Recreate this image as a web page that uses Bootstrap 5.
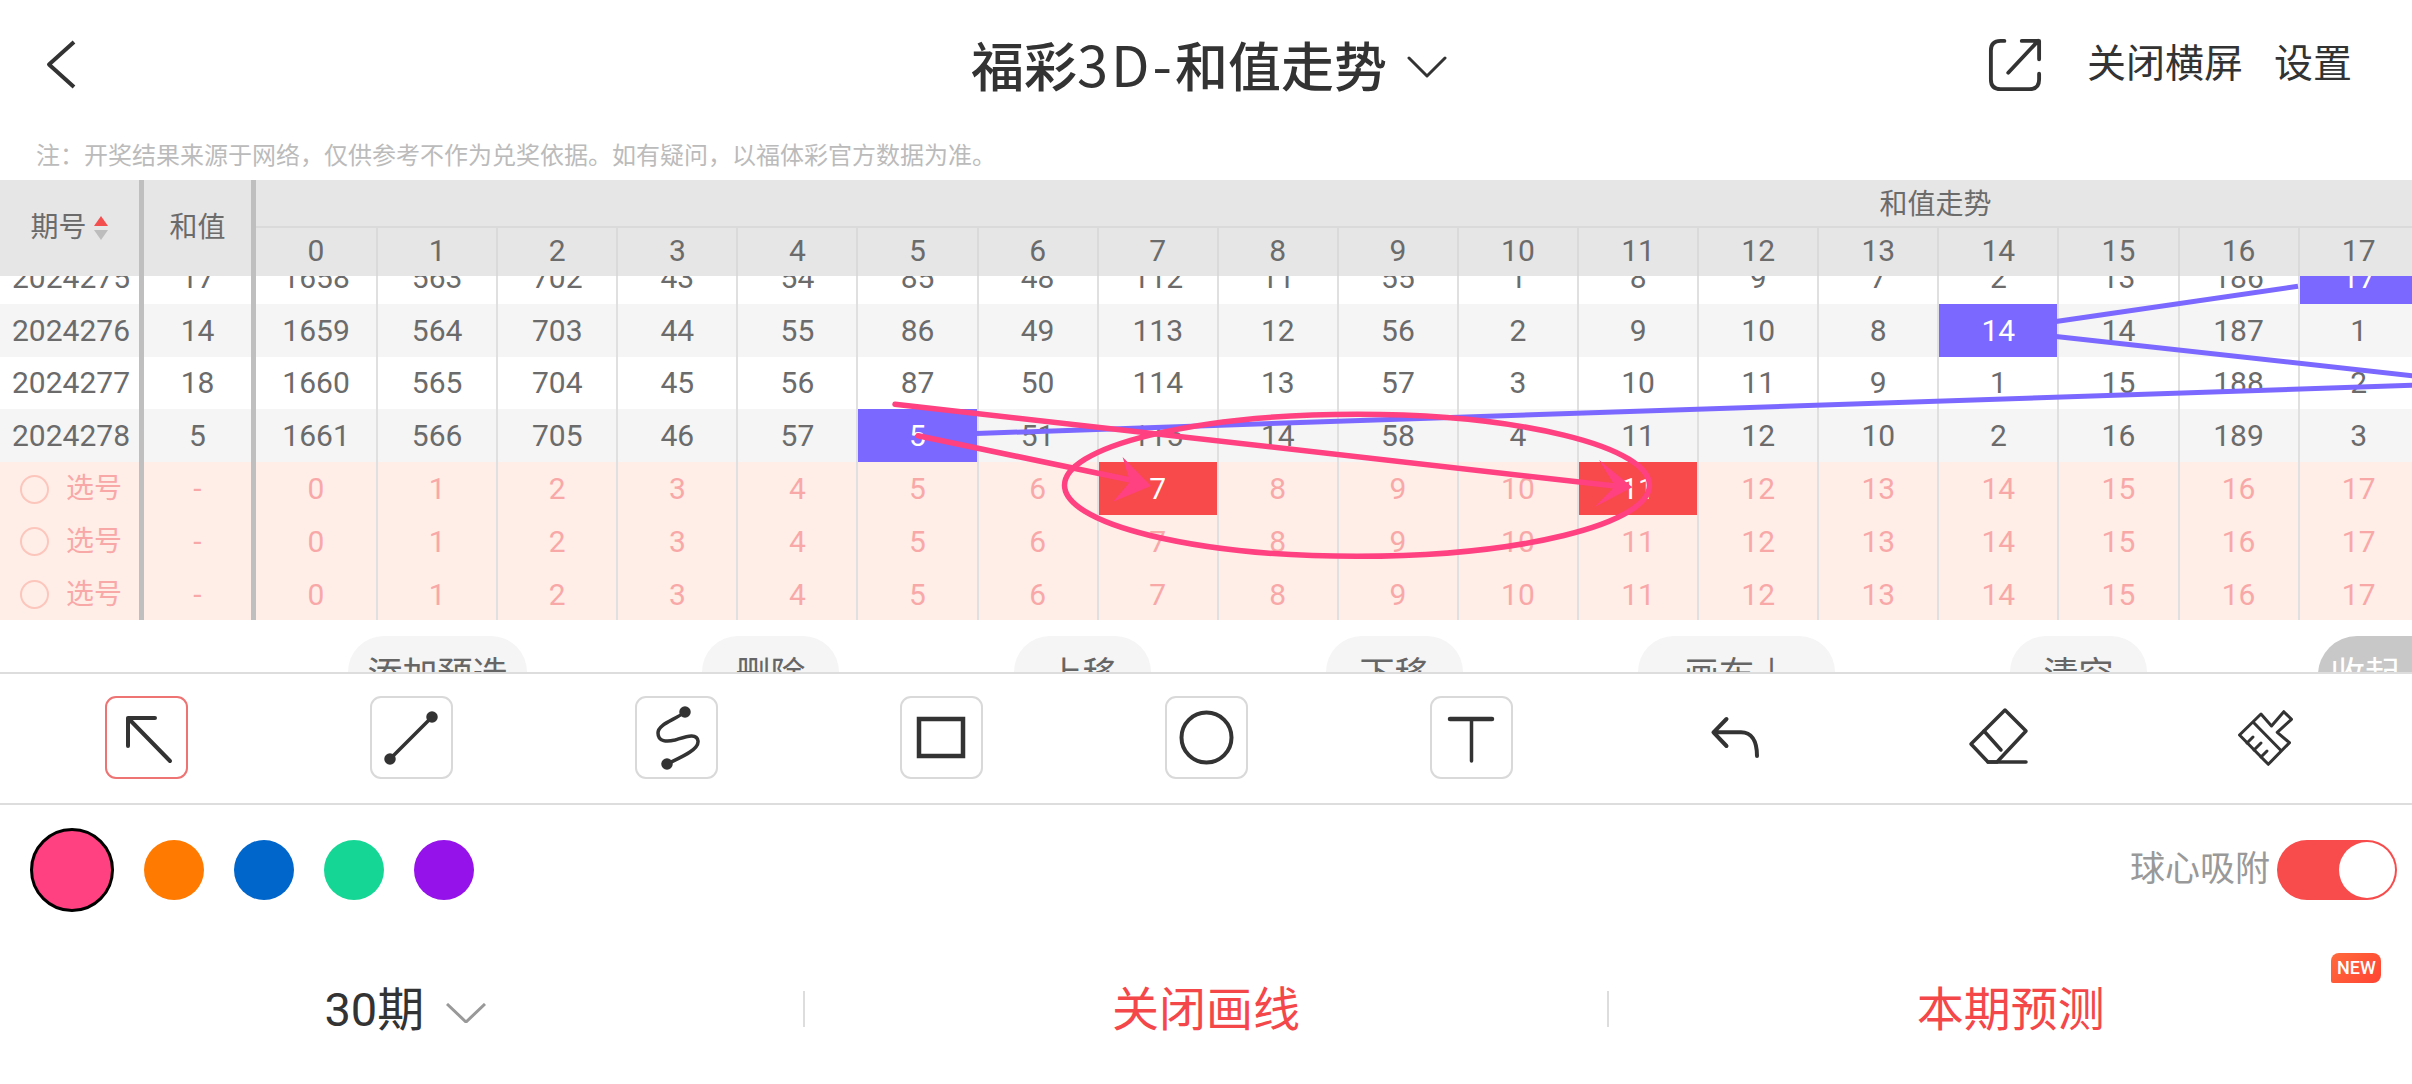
<!DOCTYPE html>
<html lang="zh-CN">
<head>
  <meta charset="UTF-8">
  <title>福彩3D-和值走势</title>
  <link href="https://cdn.jsdelivr.net/npm/bootstrap@5.3.0/dist/css/bootstrap.min.css" rel="stylesheet">
  <style>
    body {
      width: 2412px;
      height: 1084px;
      overflow: hidden;
      background: #fff;
      color: #333;
      font-family: Roboto, "Noto Sans CJK SC", sans-serif;
    }
    svg { display: block; }
    .ico { fill: none; stroke: #333; stroke-linecap: round; stroke-linejoin: round; }

    .top-bar { height: 126px; padding: 3px 60px 0 44px; }
    .top-side { flex: 1 1 0; }
    .back-ico { width: 32px; height: 52px; }
    .title-group { margin: -3px 0 0 22px; }
    .top-title { font-family: "Noto Sans CJK SC", sans-serif; font-size: 53px; font-weight: 500; line-height: 1; }
    .title-num { font-size: 56px; font-weight: 400; letter-spacing: 3px; }
    .title-chev { width: 40px; height: 22px; margin-left: 20px; margin-top: 8px; }
    .share-ico { width: 54px; height: 54px; }
    .top-link { font-size: 39px; line-height: 1; }
    .top-link-first { margin-left: 45px; margin-right: 31px; }

    .note-line { height: 54px; padding: 14px 0 0 36px; font-size: 24px; line-height: 32px; color: #bbb; }

    .trend-wrap { height: 440px; overflow: hidden; }
    .trend-tbl {
      --bs-table-bg: transparent;
      table-layout: fixed;
      width: 3620.8px;
      margin: 0;
      border-collapse: separate;
      border-spacing: 0;
      color: #6b6b6b;
      font-size: 30px;
      line-height: 1;
    }
    .trend-tbl > :not(caption) > * > * {
      padding: 0;
      text-align: center;
      vertical-align: middle;
      border-right: 2px solid #e0e0e0;
      color: inherit;
      font-weight: 400;
    }
    .trend-tbl > :not(caption) > * > .side-cell { border-right: 5px solid #bfbfbf; }
    .trend-tbl .col-id { width: 144px; }
    .trend-tbl .col-sum { width: 112px; }
    .trend-tbl .col-first { width: 122.1px; }
    .trend-tbl .col-num { width: 120.1px; }

    .head-tbl { background: #e6e6e6; }
    .head-tbl tr { height: 48px; }
    .head-tbl .cjk-head { font-size: 28px; }
    .head-tbl > :not(caption) > * > * { border-right-color: #dadada; padding-bottom: 2px; }
    .head-tbl > :not(caption) > * > .side-cell { padding-bottom: 0; }
    .head-tbl > :not(caption) > * > .group-cell { padding: 3px 6px 0 0; border-bottom: 2px solid #dadada; border-right: 0; }
    .sort-ico { width: 16px; height: 24px; margin-left: 6px; }

    .body-clip { height: 186px; overflow: hidden; }
    .data-tbl { margin-top: -24.67px !important; }
    .data-tbl tr { height: 52.67px; }
    .data-tbl tr.even-row { background: #f5f5f5; }
    .trend-tbl.data-tbl > tbody > tr > td { padding-top: 1px; }
    .trend-tbl.data-tbl > tbody > tr > td.id-cell { padding-left: 3px; }
    .trend-tbl > tbody > tr > td.hit-blue { background: #7b68ff; color: #fff; }

    .pick-tbl { background: #ffeee8; color: #f9a8a8; }
    .pick-tbl tr { height: 52.67px; }
    .trend-tbl.pick-tbl > tbody > tr > td { padding-top: 2px; }
    .trend-tbl.pick-tbl > tbody > tr > td.cjk-pick { font-size: 28px; padding-left: 3px; }
    .pick-dot {
      width: 29px;
      height: 29px;
      margin-right: 17px;
      border: 2px solid #fcc6bc;
      border-radius: 50%;
    }
    .trend-tbl > tbody > tr > td.hit-red { background: #f84a4a; color: #fff; }

    .draw-layer { left: 0; top: 0; width: 2412px; height: 440px; pointer-events: none; }

    .act-row { height: 52px; padding: 16px 0 0 348px; gap: 175px; overflow: hidden; }
    .act-btn {
      flex: 0 0 auto;
      width: 137px;
      height: 78px;
      padding: 0;
      border: 0;
      border-radius: 36px;
      background: #f5f5f5;
      color: #666;
      font-size: 35px;
      line-height: 1;
    }
    .act-wide { width: 179px; }
    .act-canvas { width: 197px; }
    .act-fold { width: 94px; margin-left: -4px; background: #c8c8c8; color: #fff; border-radius: 40px 0 0 40px; }

    .tool-row { height: 133px; padding: 22px 13.5px 0; border-top: 2px solid #ddd; border-bottom: 2px solid #ddd; }
    .tool-cell { flex: 1 1 0; display: flex; justify-content: center; }
    .tool-box { width: 83px; height: 83px; border: 2px solid transparent; border-radius: 11px; }
    .tool-box svg { margin: -2px; width: 83px; height: 83px; }
    .tool-framed { border-color: #d9d9d9; }
    .tool-active { border-color: #ee7373; }

    .color-row { height: 129px; padding: 0 15px 0 30px; }
    .swatch { width: 60px; height: 60px; border-radius: 50%; margin-right: 30px; }
    .swatch-on { width: 84px; height: 84px; border: 3px solid #000; }
    .sw-pink { background: #ff4081; }
    .sw-orange { background: #ff7a00; }
    .sw-blue { background: #0066cc; }
    .sw-green { background: #16d695; }
    .sw-purple { background: #9512ea; }
    .snap-label { font-size: 35px; line-height: 1; color: #999; margin-right: 7px; }
    .snap-toggle { width: 120px; height: 60px; padding: 2px; border-radius: 30px; background: #f84c4c; }
    .snap-knob { width: 56px; height: 56px; border-radius: 50%; background: #fff; }

    .foot-row { height: 150px; }
    .foot-cell { flex: 1 1 0; align-self: stretch; }
    .foot-sep { width: 2px; height: 36px; background: #ddd; }
    .foot-period { font-size: 47px; line-height: 1; margin-left: 8px; }
    .foot-chev { width: 40px; height: 20px; margin-left: 22px; margin-top: 8px; }
    .foot-red { font-size: 47px; line-height: 1; color: #f4474a; }
    .new-tag {
      left: 722px;
      top: 19px;
      width: 50px;
      height: 30px;
      border-radius: 8px 8px 8px 2px;
      background: linear-gradient(135deg, #ff6a3c, #ff4433);
      color: #fff;
      font-size: 18px;
      font-weight: 500;
      line-height: 30px;
      text-align: center;
    }
  </style>
</head>
<body>

  <header class="top-bar d-flex align-items-center">
    <div class="top-side">
      <svg class="back-ico ico" viewBox="0 0 32 52" stroke-width="4"><polyline points="30,3 5,25.5 30,48" stroke-linecap="butt"/></svg>
    </div>
    <div class="title-group d-flex align-items-center">
      <div class="top-title">福彩<span class="title-num">3D-</span>和值走势</div>
      <svg class="title-chev ico" viewBox="0 0 40 22" stroke-width="3"><polyline points="2,2 20,20 38,2"/></svg>
    </div>
    <div class="top-side d-flex align-items-center justify-content-end">
      <svg class="share-ico ico" viewBox="0 0 56 56" stroke-width="4">
        <path d="M17 3H13Q3 3 3 13V43Q3 53 13 53H43Q53 53 53 43V37"/>
        <path d="M21 36L52 3M35 3H53V22"/>
      </svg>
      <span class="top-link top-link-first">关闭横屏</span>
      <span class="top-link">设置</span>
    </div>
  </header>

  <div class="note-line">注：开奖结果来源于网络，仅供参考不作为兑奖依据。如有疑问，以福体彩官方数据为准。</div>

  <section class="trend-wrap position-relative">
    <table class="table table-borderless trend-tbl head-tbl">
      <colgroup id="headCols"></colgroup>
      <thead>
        <tr>
          <th class="side-cell cjk-head" rowspan="2">
            <span class="d-inline-flex align-items-center justify-content-center">期号
              <svg class="sort-ico" viewBox="0 0 16 24"><polygon points="8,0 15,10 1,10" fill="#f44f4f"/><polygon points="1,14 15,14 8,24" fill="#bdbdbd"/></svg>
            </span>
          </th>
          <th class="side-cell cjk-head" rowspan="2">和值</th>
          <th class="group-cell cjk-head" colspan="28">和值走势</th>
        </tr>
        <tr id="headNums"></tr>
      </thead>
    </table>

    <div class="body-clip">
      <table class="table table-borderless trend-tbl data-tbl">
        <colgroup id="dataCols"></colgroup>
        <tbody id="dataBody"></tbody>
      </table>
    </div>

    <table class="table table-borderless trend-tbl pick-tbl">
      <colgroup id="pickCols"></colgroup>
      <tbody id="pickBody"></tbody>
    </table>

    <!-- trend lines and hand-drawn marks, in page coordinates -->
    <svg class="draw-layer position-absolute" viewBox="0 180 2412 440">
      <g stroke="#7b68ff" stroke-width="5" fill="none">
        <line x1="2056" y1="321.5" x2="2298" y2="286.2"/>
        <line x1="2056" y1="336.4" x2="2478" y2="383"/>
        <line x1="976" y1="433.5" x2="2478" y2="383"/>
      </g>
      <g stroke="#ff4081" stroke-width="5.5" fill="none" stroke-linecap="round">
        <line x1="918" y1="435.7" x2="1135" y2="481"/>
        <line x1="895" y1="404.3" x2="1615" y2="486"/>
        <ellipse cx="1357" cy="485.3" rx="292.5" ry="71"/>
      </g>
      <g fill="#ff4081">
        <polygon points="1151,486 1122.6,457 1130,481.7 1113,501.7"/>
        <polygon points="1632.4,487.3 1599,460 1615,486 1595,506.7"/>
      </g>
    </svg>
  </section>

  <div class="act-row d-flex">
    <button class="btn act-btn act-wide">添加预选</button>
    <button class="btn act-btn">删除</button>
    <button class="btn act-btn">上移</button>
    <button class="btn act-btn">下移</button>
    <button class="btn act-btn act-canvas">画布↓</button>
    <button class="btn act-btn">清空</button>
    <button class="btn act-btn act-fold">收起</button>
  </div>

  <div class="tool-row d-flex align-items-start">
    <div class="tool-cell"><div class="tool-box tool-active">
      <svg class="ico" viewBox="0 0 83 83" stroke-width="4"><path d="M23 50V22H50M23 22L65 65"/></svg>
    </div></div>
    <div class="tool-cell"><div class="tool-box tool-framed">
      <svg class="ico" viewBox="0 0 83 83" stroke-width="3.5"><path d="M62 21L20 63"/><circle cx="62" cy="21" r="4" fill="#333"/><circle cx="20" cy="63" r="4" fill="#333"/></svg>
    </div></div>
    <div class="tool-cell"><div class="tool-box tool-framed">
      <svg class="ico" viewBox="0 0 83 83" stroke-width="3.5"><path d="M50 16C40 24 23 28 23 37C23 46 32 46 40 44C50 41 62 36 63 45C64 54 44 62 32 68"/><circle cx="50" cy="16" r="4" fill="#333"/><circle cx="32" cy="68" r="4" fill="#333"/></svg>
    </div></div>
    <div class="tool-cell"><div class="tool-box tool-framed">
      <svg class="ico" viewBox="0 0 83 83" stroke-width="4.5"><rect x="19" y="23" width="44" height="37" stroke-linejoin="miter"/></svg>
    </div></div>
    <div class="tool-cell"><div class="tool-box tool-framed">
      <svg class="ico" viewBox="0 0 83 83" stroke-width="4"><circle cx="41.5" cy="41.5" r="25"/></svg>
    </div></div>
    <div class="tool-cell"><div class="tool-box tool-framed">
      <svg class="ico" viewBox="0 0 83 83" stroke-width="3.5"><path d="M20 23H62" stroke-width="4.5"/><path d="M41.5 23V65"/></svg>
    </div></div>
    <div class="tool-cell"><div class="tool-box">
      <svg class="ico" viewBox="0 0 83 83" stroke-width="4"><path d="M31.5 23L18.5 36.3L31.5 50M18.5 36.3H46C56 36.3 62 44 62 60"/></svg>
    </div></div>
    <div class="tool-cell"><div class="tool-box">
      <svg class="ico" viewBox="0 0 83 83" stroke-width="3.5"><path d="M45 14L66 35L37 66H28L11 48Z"/><path d="M24 35L41 54M28 66H66"/></svg>
    </div></div>
    <div class="tool-cell"><div class="tool-box">
      <svg class="ico" viewBox="0 0 83 83" stroke-width="3"><path d="M36 18L46.5 30L58.8 15.7L66.5 23.3L52.2 36.3L64.5 46.7L43.3 68.3L14.5 39Z"/><path d="M29 27L55.5 54M22 47L28 41M29 54L36 47M36 61L42 55"/></svg>
    </div></div>
  </div>

  <div class="color-row d-flex align-items-center">
    <div class="swatch swatch-on sw-pink"></div>
    <div class="swatch sw-orange"></div>
    <div class="swatch sw-blue"></div>
    <div class="swatch sw-green"></div>
    <div class="swatch sw-purple"></div>
    <div class="d-flex align-items-center ms-auto">
      <span class="snap-label">球心吸附</span>
      <div class="snap-toggle d-flex justify-content-end"><div class="snap-knob"></div></div>
    </div>
  </div>

  <footer class="foot-row d-flex align-items-center">
    <div class="foot-cell d-flex align-items-center justify-content-center">
      <span class="foot-period">30期</span>
      <svg class="foot-chev" viewBox="0 0 40 20" fill="none" stroke="#999" stroke-width="3"><polyline points="1,1 20,19 39,1"/></svg>
    </div>
    <div class="foot-sep"></div>
    <div class="foot-cell d-flex align-items-center justify-content-center foot-red">关闭画线</div>
    <div class="foot-sep"></div>
    <div class="foot-cell d-flex align-items-center justify-content-center foot-red position-relative">
      本期预测
      <span class="new-tag position-absolute">NEW</span>
    </div>
  </footer>

  <script src="https://cdn.jsdelivr.net/npm/bootstrap@5.3.0/dist/js/bootstrap.bundle.min.js"></script>
  <script>
const rows = [
  { id: 2024275, sum: 17, nums: [1658, 563, 702, 43, 54, 85, 48, 112, 11, 55, 1, 8, 9, 7, 2, 13, 186, 17], hit: 17 },
  { id: 2024276, sum: 14, nums: [1659, 564, 703, 44, 55, 86, 49, 113, 12, 56, 2, 9, 10, 8, 14, 14, 187, 1], hit: 14 },
  { id: 2024277, sum: 18, nums: [1660, 565, 704, 45, 56, 87, 50, 114, 13, 57, 3, 10, 11, 9, 1, 15, 188, 2], hit: 18 },
  { id: 2024278, sum: 5, nums: [1661, 566, 705, 46, 57, 5, 51, 115, 14, 58, 4, 11, 12, 10, 2, 16, 189, 3], hit: 5 }
];
const pickedCols = [7, 11]; // only the first pick row has marked numbers
const filler = '<td colspan="10"></td>';

const cols = '<col class="col-id"><col class="col-sum"><col class="col-first">' + '<col class="col-num">'.repeat(27);
["headCols", "dataCols", "pickCols"].forEach(id => {
  document.getElementById(id).outerHTML = `<colgroup>${cols}</colgroup>`;
});

let head = "";
for (let i = 0; i < 18; i++) head += `<th>${i}</th>`;
document.getElementById("headNums").innerHTML = head + '<th colspan="10"></th>';

document.getElementById("dataBody").innerHTML = rows.map((row, r) => {
  const cells = row.nums.map((n, i) => `<td class="${i === row.hit ? "hit-blue" : ""}">${n}</td>`).join("");
  return `<tr class="${r % 2 ? "even-row" : ""}"><td class="side-cell id-cell">${row.id}</td><td class="side-cell">${row.sum}</td>${cells}${filler}</tr>`;
}).join("");

let picks = "";
for (let r = 0; r < 3; r++) {
  let cells = "";
  for (let i = 0; i < 18; i++) {
    cells += `<td class="${r === 0 && pickedCols.includes(i) ? "hit-red" : ""}">${i}</td>`;
  }
  picks += `<tr><td class="side-cell cjk-pick"><span class="d-flex align-items-center justify-content-center"><span class="pick-dot"></span>选号</span></td><td class="side-cell">-</td>${cells}${filler}</tr>`;
}
document.getElementById("pickBody").innerHTML = picks;
  </script>
</body>
</html>
